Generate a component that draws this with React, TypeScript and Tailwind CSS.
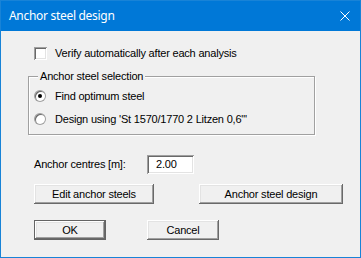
import React from "react";

const raised =
  "shadow-[inset_-1px_-1px_0_#696969,inset_1px_1px_0_#ffffff,inset_-2px_-2px_0_#a0a0a0,inset_2px_2px_0_#e3e3e3]";
const sunken =
  "shadow-[inset_1px_1px_0_#a0a0a0,inset_-1px_-1px_0_#ffffff,inset_2px_2px_0_#696969,inset_-2px_-2px_0_#e3e3e3]";

function Btn({ label, w, def }: { label: string; w: string; def?: boolean }) {
  if (def) {
    return (
      <div className={`${w} h-[20px] border border-[#646464] bg-[#f0f0f0]`}>
        <div
          className={`w-full h-full flex items-center justify-center ${raised}`}
        >
          {label}
        </div>
      </div>
    );
  }
  return (
    <div
      className={`${w} h-[20px] flex items-center justify-center bg-[#f0f0f0] ${raised}`}
    >
      {label}
    </div>
  );
}

function Radio({ checked }: { checked?: boolean }) {
  return (
    <div className="w-[12px] h-[12px] rounded-full bg-[#a0a0a0] p-[1px] flex">
      <div className="flex-1 rounded-full bg-white flex items-center justify-center shadow-[inset_1px_1px_0_#696969]">
        {checked && <div className="w-[4px] h-[4px] rounded-full bg-black" />}
      </div>
    </div>
  );
}

export default function App() {
  return (
    <div
      className="w-[361px] h-[258px] border border-[#1883d7] bg-[#f0f0f0] flex flex-col text-[11px] text-black"
      style={{ fontFamily: '"Liberation Sans", Arial, sans-serif' }}
    >
      <div className="h-[30px] bg-[#0078d7] flex items-center justify-between pl-[8px] pr-[10px] shrink-0">
        <span
          className="text-white text-[12px] tracking-[-0.3px]"
          style={{ fontFamily: '"Noto Sans", "Open Sans", sans-serif' }}
        >
          Anchor steel design
        </span>
        <svg width="10" height="10" viewBox="0 0 10 10">
          <path d="M0.5 0.5 L9.5 9.5 M9.5 0.5 L0.5 9.5" stroke="white" strokeWidth="1" />
        </svg>
      </div>

      <div className="flex flex-col tracking-[-0.2px]">
        <div className="mt-[16px] ml-[33px] h-[13px] flex items-center gap-[8px]">
          <div className={`w-[13px] h-[13px] bg-white ${sunken}`} />
          <span>Verify automatically after each analysis</span>
        </div>

        <div className="relative mt-[16px] ml-[27px] w-[287px] h-[59px] border border-[#a0a0a0] shadow-[1px_1px_0_#ffffff,inset_1px_1px_0_#ffffff] flex flex-col">
          <span className="absolute left-[9px] top-[-8px] px-[2px] bg-[#f0f0f0] leading-[14px]">
            Anchor steel selection
          </span>
          <div className="mt-[13px] ml-[5px] h-[12px] flex items-center gap-[9px]">
            <Radio checked />
            <span>Find optimum steel</span>
          </div>
          <div className="mt-[11px] ml-[5px] h-[12px] flex items-center gap-[9px]">
            <Radio />
            <span>Design using 'St 1570/1770 2 Litzen 0,6"'</span>
          </div>
        </div>

        <div className="mt-[20px] ml-[33px] h-[19px] flex items-center">
          <span className="w-[113px]">Anchor centres [m]:</span>
          <div className={`w-[47px] h-[19px] bg-white flex items-center pl-[9px] ${sunken}`}>
            2.00
          </div>
        </div>

        <div className="mt-[10px] ml-[33px] flex">
          <Btn label="Edit anchor steels" w="w-[120px]" />
          <div className="ml-[45px]">
            <Btn label="Anchor steel design" w="w-[144px]" />
          </div>
        </div>

        <div className="mt-[16px] ml-[33px] flex">
          <Btn label="OK" w="w-[72px]" def />
          <div className="ml-[41px]">
            <Btn label="Cancel" w="w-[72px]" />
          </div>
        </div>
      </div>
    </div>
  );
}
